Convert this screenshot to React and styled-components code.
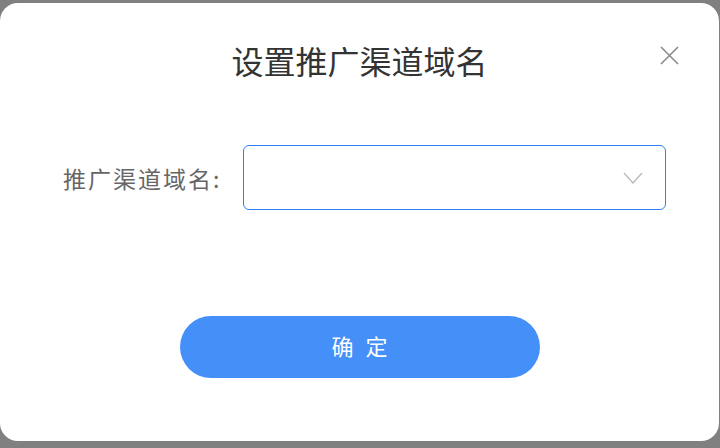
import React from 'react';
import styled, { createGlobalStyle } from 'styled-components';

const GlobalStyle = createGlobalStyle`
  html, body {
    margin: 0;
    padding: 0;
    background: #808080;
    font-family: "Noto Sans CJK SC", "Noto Sans", sans-serif;
  }
`;

const Page = styled.div`
  width: 720px;
  height: 448px;
  overflow: hidden;
`;

const Dialog = styled.div`
  position: relative;
  box-sizing: border-box;
  width: 719px;
  height: 438px;
  margin-top: 3px;
  background: #fff;
  border-radius: 18px;
  display: flex;
  flex-direction: column;
`;

const Header = styled.div`
  height: 114px;
  display: flex;
  align-items: center;
  justify-content: center;
`;

const Title = styled.h2`
  margin: 0;
  font-size: 32px;
  font-weight: 400;
  line-height: 1;
  color: #333;
`;

const Close = styled.button`
  position: absolute;
  top: 43px;
  right: 40px;
  width: 19px;
  height: 19px;
  padding: 0;
  border: none;
  background: none;
  cursor: pointer;
  display: flex;
`;

const FormRow = styled.div`
  margin-top: 28px;
  padding-left: 63px;
  display: flex;
  align-items: center;
`;

const Label = styled.label`
  width: 180px;
  font-size: 23px;
  letter-spacing: 2px;
  color: #666;
  white-space: nowrap;
`;

const Select = styled.div`
  box-sizing: border-box;
  width: 423px;
  height: 65px;
  border: 1px solid #2f80f5;
  border-radius: 6px;
  display: flex;
  align-items: center;
  justify-content: flex-end;
  padding-right: 22px;
`;

const Footer = styled.div`
  margin-top: 106px;
  display: flex;
  justify-content: center;
`;

const Confirm = styled.button`
  width: 360px;
  height: 62px;
  padding: 0 0 4px;
  border: none;
  border-radius: 31px;
  background: #4590f8;
  color: #fff;
  font-family: inherit;
  font-size: 22px;
  letter-spacing: 12px;
  text-indent: 12px;
  cursor: pointer;
`;

const App = () => {
  return (
    <Page>
      <GlobalStyle />
      <Dialog>
        <Header>
          <Title>设置推广渠道域名</Title>
          <Close aria-label="关闭">
            <svg width="19" height="19" viewBox="0 0 19 19">
              <path d="M1 1L18 18M18 1L1 18" stroke="#8a8a8a" strokeWidth="1.6" fill="none" />
            </svg>
          </Close>
        </Header>
        <FormRow>
          <Label>推广渠道域名:</Label>
          <Select>
            <svg width="20" height="12" viewBox="0 0 20 12">
              <polyline points="1,1 10,11 19,1" stroke="#bbb" strokeWidth="1.4" fill="none" />
            </svg>
          </Select>
        </FormRow>
        <Footer>
          <Confirm>确定</Confirm>
        </Footer>
      </Dialog>
    </Page>
  );
};

export default App;
